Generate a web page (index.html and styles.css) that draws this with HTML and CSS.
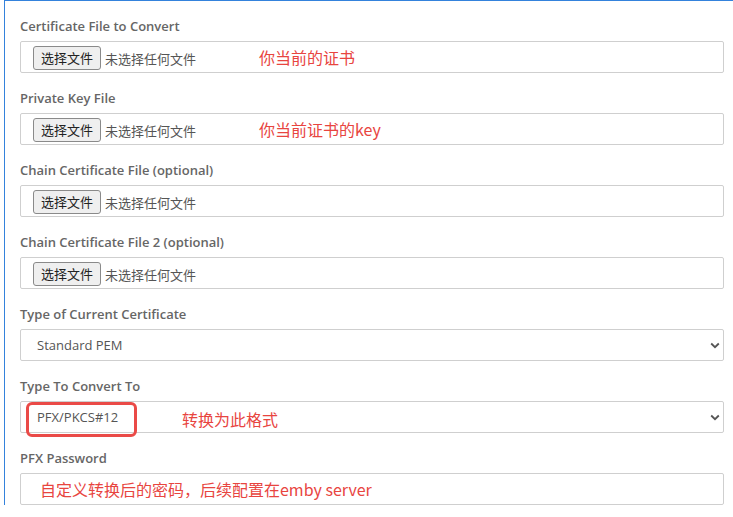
FILE: index.html
```html
<!DOCTYPE html>
<html lang="zh">
<head>
<meta charset="utf-8">
<link rel="stylesheet" href="styles.css">
</head>
<body>
<div class="card">
  <div class="group">
    <label class="label">Certificate File to Convert</label>
    <div class="field file">
      <span class="file-btn">选择文件</span><span class="file-none">未选择任何文件</span>
      <span class="note note-file">你当前的证书</span>
    </div>
  </div>
  <div class="group">
    <label class="label">Private Key File</label>
    <div class="field file">
      <span class="file-btn">选择文件</span><span class="file-none">未选择任何文件</span>
      <span class="note note-file">你当前证书的key</span>
    </div>
  </div>
  <div class="group">
    <label class="label">Chain Certificate File (optional)</label>
    <div class="field file">
      <span class="file-btn">选择文件</span><span class="file-none">未选择任何文件</span>
    </div>
  </div>
  <div class="group">
    <label class="label">Chain Certificate File 2 (optional)</label>
    <div class="field file">
      <span class="file-btn">选择文件</span><span class="file-none">未选择任何文件</span>
    </div>
  </div>
  <div class="group">
    <label class="label">Type of Current Certificate</label>
    <div class="field select">
      <span class="select-value">Standard PEM</span>
      <svg class="chev" width="10" height="7" viewBox="0 0 10 7"><path d="M1.2 1.5 L5 5.2 L8.8 1.5" fill="none" stroke="#555" stroke-width="1.8"/></svg>
    </div>
  </div>
  <div class="group">
    <label class="label">Type To Convert To</label>
    <div class="field select">
      <span class="select-value">PFX/PKCS#12</span>
      <span class="note note-select">转换为此格式</span>
      <span class="highlight"></span>
      <svg class="chev" width="10" height="7" viewBox="0 0 10 7"><path d="M1.2 1.5 L5 5.2 L8.8 1.5" fill="none" stroke="#555" stroke-width="1.8"/></svg>
    </div>
  </div>
  <div class="group">
    <label class="label">PFX Password</label>
    <div class="field password">
      <span class="note-pass">自定义转换后的密码，后续配置在emby server</span>
    </div>
  </div>
</div>
</body>
</html>
```
FILE: styles.css
```css
* { box-sizing: border-box; }
html, body { margin: 0; padding: 0; background: #fff; }
body {
  font-family: "Open Sans", "Noto Sans CJK SC", sans-serif;
  overflow: hidden;
  width: 733px;
  height: 517px;
}
.card {
  margin-left: 4px;
  width: 760px;
  border-left: 1px solid #3482dc;
  border-top: 1px solid #3482dc;
  padding: 16px 0 0 15px;
}
.group {
  display: flex;
  flex-direction: column;
  margin-bottom: 16px;
}
.label {
  display: block;
  font-size: 13px;
  font-weight: 600;
  color: #666;
  line-height: 19px;
  height: 18px;
  margin-bottom: 6px;
}
.field {
  position: relative;
  width: 704px;
  height: 32px;
  border: 1px solid #cfcfcf;
  border-radius: 2px;
  display: flex;
  align-items: center;
  background: #fff;
}
.file { padding-left: 12px; }
.file-btn {
  font-family: "Noto Sans CJK SC", sans-serif;
  font-size: 13px;
  color: #222;
  height: 24px;
  line-height: 22px;
  padding: 0 6px;
  border: 1px solid #8a8a8a;
  border-radius: 3px;
  background: #efefef;
  width: 68px;
  text-align: center;
  margin-top: 1px;
}
.file-none {
  font-family: "Noto Sans CJK SC", sans-serif;
  font-size: 13px;
  color: #555;
  margin-left: 4px;
  margin-top: 2px;
}
.note {
  position: absolute;
  font-family: "Noto Sans CJK SC", sans-serif;
  font-size: 16px;
  color: #e8453f;
  line-height: 20px;
}
.note-file { left: 238px; top: 5px; }
.select { padding-left: 16px; justify-content: space-between; padding-right: 3px; }
.select-value { font-size: 13px; color: #555; }
.note-select { left: 161px; top: 7px; }
.highlight {
  position: absolute;
  left: 5px;
  top: 0;
  width: 111px;
  height: 35px;
  border: 3px solid #ea4a47;
  border-radius: 6px;
}
.chev { display: block; margin-top: 1px; }
.password { padding-left: 19px; }
.note-pass {
  font-family: "Noto Sans CJK SC", sans-serif;
  font-size: 16px;
  color: #e8453f;
  margin-top: 0;
}
```
